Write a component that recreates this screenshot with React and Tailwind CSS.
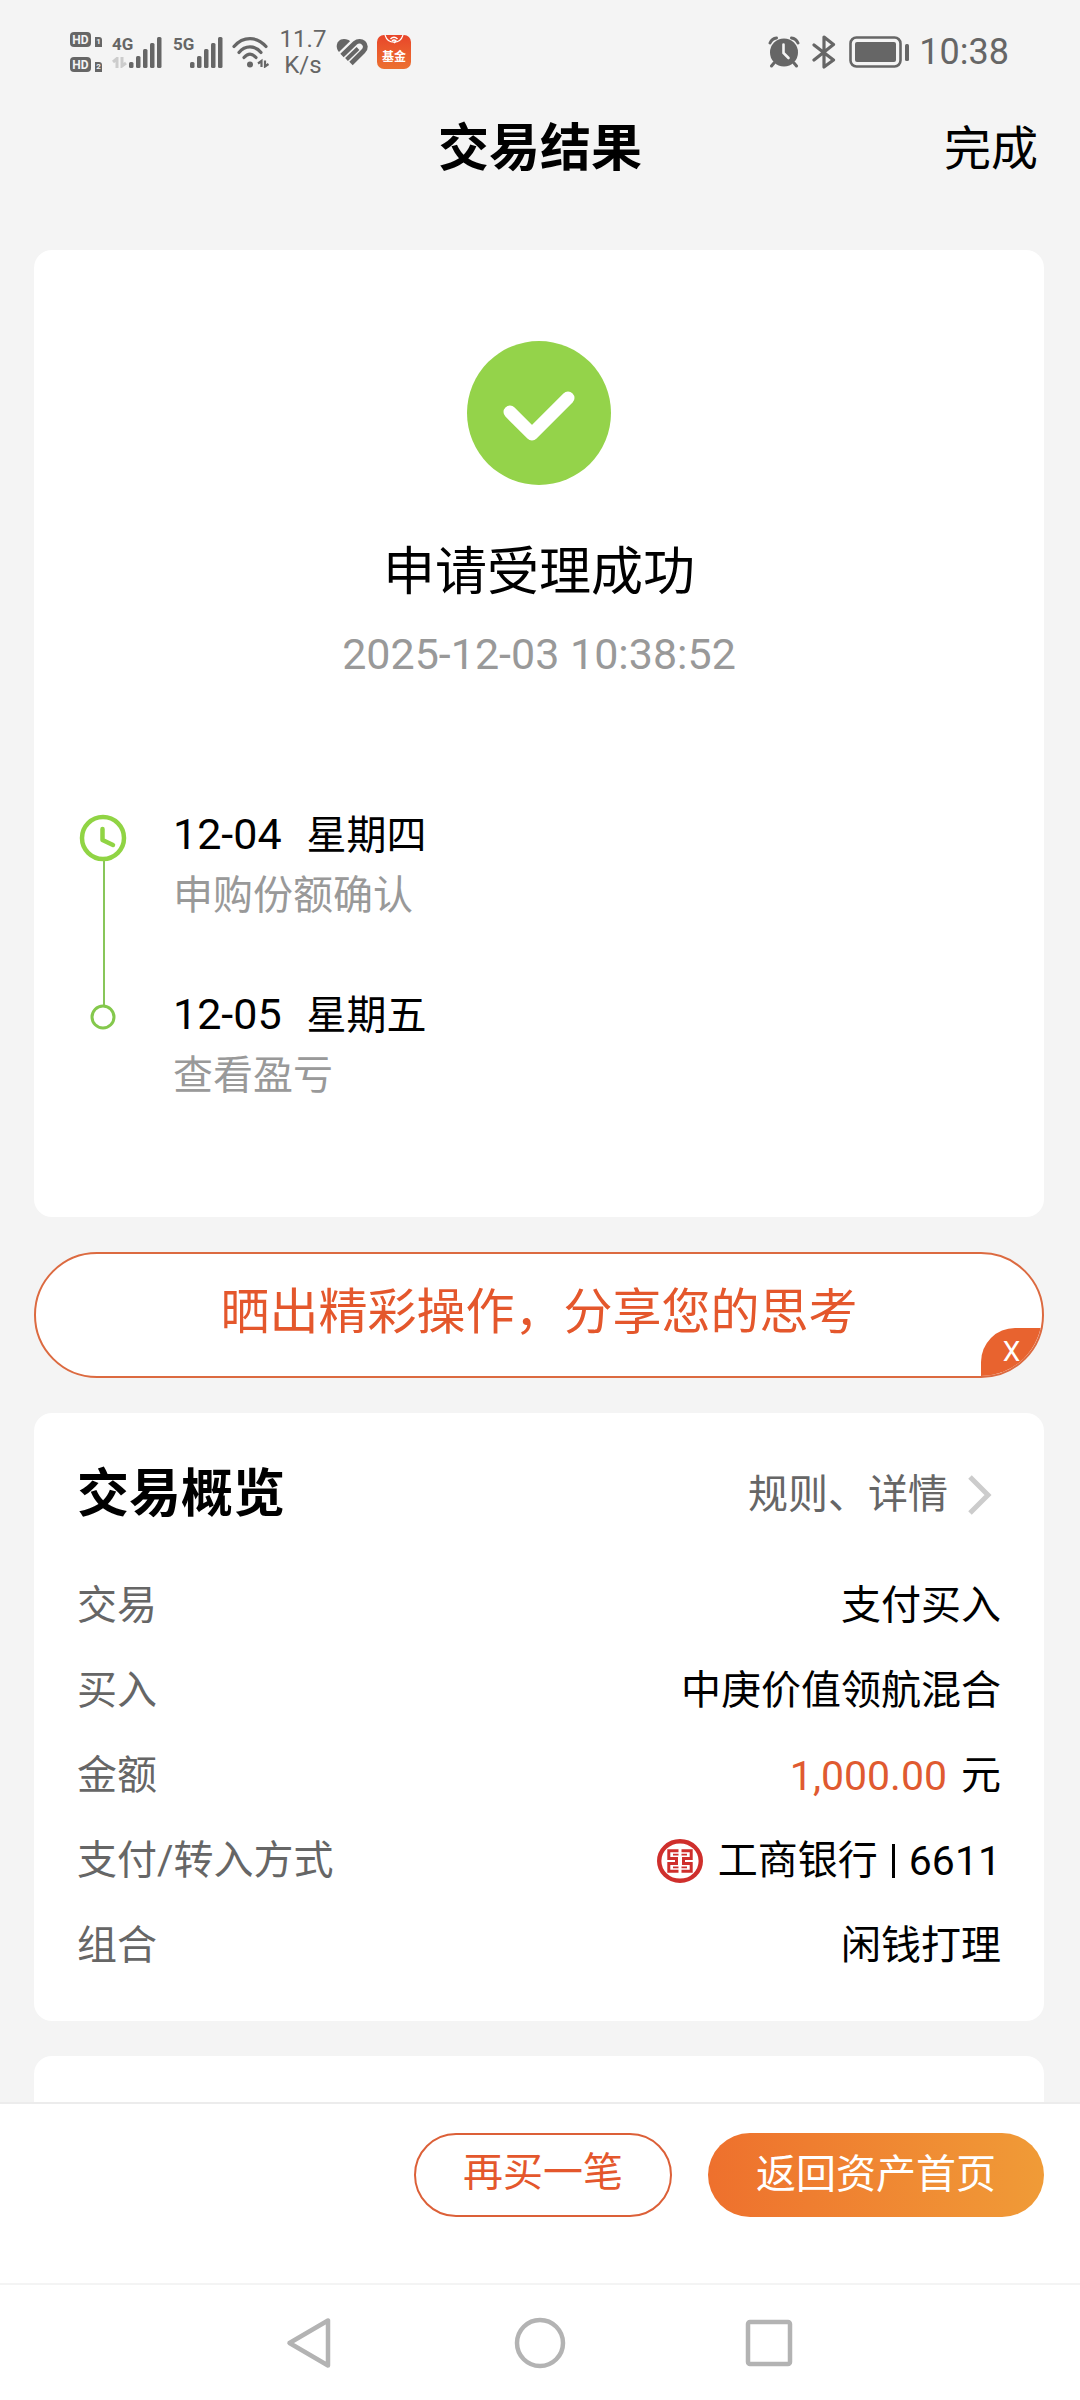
import { useState } from 'react'

const STEPS = [
  { date: '12-04', day: '星期四', text: '申购份额确认' },
  { date: '12-05', day: '星期五', text: '查看盈亏' },
]

function HdBadge({ sim }) {
  return (
    <div className="flex items-end gap-1">
      <span className="flex h-[15px] w-[21px] items-center justify-center rounded-[4px] bg-[#666] text-[12px] leading-none font-bold text-[#f4f4f4]">
        HD
      </span>
      <span className="flex h-[10px] w-[7px] items-center justify-center rounded-tr-[3px] bg-[#666] text-[8px] leading-none font-bold text-[#f4f4f4]">
        {sim}
      </span>
    </div>
  )
}

function DataArrows({ className }) {
  return (
    <svg viewBox="0 0 15 11" className={className} fill="none" stroke="currentColor" strokeWidth="3">
      <path d="M1 5 L5 1.500 V11 M10 0 V9 L14 6" />
    </svg>
  )
}

function Signal({ label, arrows }) {
  return (
    <div className="flex h-[31px] items-stretch">
      <div className="flex w-[17px] flex-col justify-between">
        <span className="text-[17px] leading-[15px] font-bold font-[Roboto]">{label}</span>
        {arrows && <DataArrows className="h-[11px] w-[15px] text-[#ccc]" />}
      </div>
      <svg viewBox="0 0 33 31" className="h-[31px] w-[33px]" fill="currentColor">
        <rect x="0" y="25" width="4.500" height="6" rx="1.500" />
        <rect x="7" y="19" width="4.500" height="12" rx="1.500" />
        <rect x="14" y="12" width="4.500" height="19" rx="1.500" />
        <rect x="21" y="6" width="4.500" height="25" rx="1.500" />
        <rect x="28" y="0" width="4.500" height="31" rx="1.500" />
      </svg>
    </div>
  )
}

function StatusBar() {
  return (
    <div className="flex h-[104px] items-center justify-between pr-[71px] pl-[70px] text-[#666]">
      <div className="flex items-center">
        <div className="flex flex-col gap-[10px]">
          <HdBadge sim="1" />
          <HdBadge sim="2" />
        </div>
        <div className="ml-[10px] flex gap-[11px]">
          <Signal label="4G" arrows />
          <Signal label="5G" />
        </div>
        {/* wifi */}
        <svg viewBox="0 0 38 31" className="ml-[9px] h-[31px] w-[38px]" fill="none" stroke="currentColor" strokeWidth="3.200" strokeLinecap="round">
          <path d="M2 9.500 C11 -1 25 -1 34 9.500" />
          <path d="M7 15.500 C13 8 23 8 29 15.500" />
          <path d="M12 20.500 C16 16 20 16 24 20.500" />
          <circle cx="18" cy="27.500" r="3" fill="currentColor" stroke="none" />
          <path d="M26 26.500 L29.500 24 V30 M33 23.500 V29.500 L36.500 27" strokeWidth="2.200" strokeLinecap="butt" />
        </svg>
        <div className="ml-[8px] flex w-[50px] flex-col items-center text-[24px] leading-[26px] font-[Roboto]">
          <span>11.7</span>
          <span>K/s</span>
        </div>
        {/* health */}
        <svg viewBox="0 0 32 28" className="ml-[8px] h-[28px] w-[32px]" fill="none" stroke="currentColor" strokeWidth="4.800">
          <path d="M3 14 C-1.500 9 1 1 8 1 C11 1 13 2 14 3.200 Z" fill="currentColor" stroke="none" />
          <path d="M6 17.500 L19 5 C25 0 33 7 27.500 13 L15 25.500" />
          <path d="M10.500 21.500 L22 10.500" strokeWidth="4" />
        </svg>
        <div className="ml-[9px] flex h-[34px] w-[34px] flex-col items-center overflow-hidden rounded-[7px] bg-linear-to-b from-[#e8452a] to-[#ec7030] text-white">
          <svg viewBox="0 0 20 12" className="h-[12px] w-[20px] shrink-0" fill="none" stroke="currentColor">
            <path d="M1 0 A9.500 10.500 0 0 0 19 0" strokeWidth="1.200" />
            <path d="M6.500 4 Q10 0.500 13.500 4 M8 6 Q10 4 12 6 L10 8" strokeWidth="1.500" />
          </svg>
          <span className="mt-[3px] text-[12px] leading-[14px] font-bold whitespace-nowrap">基金</span>
        </div>
      </div>

      <div className="flex items-center">
        {/* alarm */}
        <svg viewBox="0 0 32 32" className="h-[32px] w-[32px]" fill="none" stroke="currentColor" strokeLinecap="round">
          <circle cx="16" cy="16.500" r="14" fill="currentColor" stroke="none" />
          <path d="M2 7 Q4 2.500 8.500 2 M30 7 Q28 2.500 23.500 2" strokeWidth="3" />
          <path d="M6 27 L3.500 30 M26 27 L28.500 30" strokeWidth="3" />
          <path d="M15.500 8.500 V17 L20.500 22" stroke="#f4f4f4" strokeWidth="2.600" />
        </svg>
        {/* bluetooth */}
        <svg viewBox="0 0 24 34" className="ml-[12px] h-[34px] w-[24px]" fill="none" stroke="currentColor" strokeWidth="3.200" strokeLinejoin="round" strokeLinecap="round">
          <path d="M2 10 L21.500 25 L12 32 V2 L21.500 9.500 L2 25" />
        </svg>
        {/* battery */}
        <svg viewBox="0 0 60 32" className="ml-[13px] h-[32px] w-[60px]" fill="currentColor">
          <rect x="1.500" y="1.500" width="50" height="29" rx="6" fill="none" stroke="currentColor" strokeWidth="2.600" />
          <rect x="6" y="6" width="41" height="20" rx="2" />
          <rect x="56" y="8" width="4" height="17" rx="1.500" />
        </svg>
        <span className="ml-[10px] text-[36px] leading-[40px] font-[Roboto]">10:38</span>
      </div>
    </div>
  )
}

function Timeline() {
  return (
    <div className="flex">
      <svg viewBox="0 0 48 218" className="mt-[10px] h-[218px] w-[48px]" fill="none">
        <path d="M25 46 V196" stroke="#88c659" strokeWidth="2" />
        <circle cx="24" cy="24" r="21" stroke="#90d444" strokeWidth="4.500" />
        <path d="M23.500 15 V26 L34 31" stroke="#90d444" strokeWidth="4.500" strokeLinecap="round" strokeLinejoin="round" />
        <circle cx="24" cy="203" r="11" fill="#fff" stroke="#84c84c" strokeWidth="3" />
      </svg>
      <ol className="ml-[46px] flex flex-col gap-[58px]">
        {STEPS.map(step => (
          <li key={step.date}>
            <p className="flex items-baseline gap-[25px] text-[40px] leading-[60px]">
              <span className="text-[43px]">{step.date}</span>
              <span>{step.day}</span>
            </p>
            <p className="text-[40px] leading-[60px] text-[#999]">{step.text}</p>
          </li>
        ))}
      </ol>
    </div>
  )
}

// ICBC mark: two mirrored halves inside a ring
function BankLogo() {
  return (
    <svg viewBox="0 0 46 44" className="h-[44px] w-[46px]" fill="none" stroke="#cf2f2c">
      <ellipse cx="23" cy="22" rx="20.800" ry="19.800" strokeWidth="4.400" />
      <path d="M21.500 11.800 H11.800 V19.500 H19.500 V24.500 H11.800 V32.200 H21.500" strokeWidth="3" />
      <path d="M24.500 11.800 H34.200 V19.500 H26.500 V24.500 H34.200 V32.200 H24.500" strokeWidth="3" />
      <path d="M16 15.600 H21.500 M24.500 15.600 H30 M16 28.400 H21.500 M24.500 28.400 H30" strokeWidth="1.600" />
    </svg>
  )
}

function Row({ label, children }) {
  return (
    <div className="flex h-[85px] items-center justify-between">
      <dt className="text-[#666]">{label}</dt>
      <dd className="flex items-center">{children}</dd>
    </div>
  )
}

export default function App() {
  const [showShare, setShowShare] = useState(true)

  return (
    <div className="flex h-screen flex-col overflow-hidden bg-[#f4f4f4] font-[Roboto,'Noto_Sans_CJK_SC',sans-serif] text-black">
      <StatusBar />

      <header className="grid h-[90px] shrink-0 grid-cols-3 items-center px-[42px]">
        <h1 className="col-start-2 text-center text-[51px] leading-[72px] font-bold">交易结果</h1>
        <button type="button" className="justify-self-end text-[47px] leading-[72px]">完成</button>
      </header>

      <main className="flex min-h-0 flex-1 flex-col gap-[35px] overflow-hidden pt-[56px] pr-[36px] pl-[34px]">
        <section className="shrink-0 rounded-[18px] bg-white px-[45px] pt-[91px] pb-[111px]">
          <div className="flex flex-col items-center">
            <svg viewBox="0 0 144 144" className="h-[144px] w-[144px]" fill="none">
              <circle cx="72" cy="72" r="72" fill="#94d34a" />
              <path d="M43 71 L65 93 L101 57" stroke="#fff" strokeWidth="13" strokeLinecap="round" strokeLinejoin="round" />
            </svg>
            <h2 className="mt-[50px] text-[52px] leading-[76px]">申请受理成功</h2>
            <time className="mt-[13px] text-[43px] leading-[60px] text-[#999]">2025-12-03 10:38:52</time>
          </div>
          <div className="mt-[120px]">
            <Timeline />
          </div>
        </section>

        {showShare && (
          <div className="relative h-[126px] shrink-0 overflow-hidden rounded-full border-2 border-[#dc6a40] bg-white">
            <button type="button" className="h-full w-full pb-[4px] text-[49px] leading-[72px] text-[#e4572c]">
              晒出精彩操作，分享您的思考
            </button>
            <button
              type="button"
              aria-label="关闭"
              onClick={() => setShowShare(false)}
              className="absolute right-0 bottom-0 h-[48px] w-[61px] rounded-tl-[34px] bg-[#e8632f] text-[28px] leading-[48px] text-white"
            >
              X
            </button>
          </div>
        )}

        <section className="shrink-0 rounded-[18px] bg-white px-[43px] pt-[41px] pb-[33px]">
          <div className="flex h-[82px] items-center justify-between">
            <h2 className="text-[52px] leading-[76px] font-bold">交易概览</h2>
            <a href="#rules" className="flex items-center gap-[20px] pr-[9px] text-[40px] leading-[60px] text-[#666]">
              规则、详情
              <svg viewBox="0 0 24 40" className="h-[40px] w-[24px]" fill="none" stroke="#ccc" strokeWidth="5">
                <path d="M2 2 L20 20 L2 38" />
              </svg>
            </a>
          </div>
          <dl className="mt-[27px] text-[40px] leading-[60px]">
            <Row label="交易">支付买入</Row>
            <Row label="买入">中庚价值领航混合</Row>
            <Row label="金额">
              <span className="mr-[14px] text-[41px] text-[#e05a30]">1,000.00</span>元
            </Row>
            <Row label="支付/转入方式">
              <BankLogo />
              <span className="ml-[15px]">工商银行</span>
              <span className="mx-[14px] h-[34px] w-[3px] bg-black" />
              <span className="text-[41px]">6611</span>
            </Row>
            <Row label="组合">闲钱打理</Row>
          </dl>
        </section>

        <section className="h-[400px] shrink-0 rounded-[18px] bg-white" />
      </main>

      <footer className="shrink-0 border-t-2 border-[#ececec] bg-white">
        <div className="flex h-[179px] items-start justify-end gap-[36px] px-[36px] pt-[29px]">
          <button type="button" className="h-[84px] rounded-full border-2 border-[#dc6038] px-[47px] pb-[4px] text-[40px] leading-[60px] text-[#e4572c]">
            再买一笔
          </button>
          <button type="button" className="h-[84px] rounded-full bg-linear-to-r from-[#ee702d] to-[#f09b37] px-[48px] text-[40px] leading-[60px] text-white">
            返回资产首页
          </button>
        </div>
        <nav className="flex h-[117px] items-center justify-center gap-[178px] border-t-2 border-[#f4f4f4]">
          <button type="button" aria-label="返回">
            <svg viewBox="0 0 52 52" className="h-[52px] w-[52px]" fill="none" stroke="#b3b3b3" strokeWidth="4.500" strokeLinejoin="round">
              <path d="M44 3.500 V48.500 L5.500 26 Z" />
            </svg>
          </button>
          <button type="button" aria-label="主页">
            <svg viewBox="0 0 52 52" className="h-[52px] w-[52px]" fill="none" stroke="#b3b3b3" strokeWidth="4.500">
              <circle cx="26" cy="26" r="23" />
            </svg>
          </button>
          <button type="button" aria-label="最近任务">
            <svg viewBox="0 0 52 52" className="h-[52px] w-[52px]" fill="none" stroke="#b3b3b3" strokeWidth="4.500">
              <rect x="4" y="5" width="42" height="42" rx="2" />
            </svg>
          </button>
        </nav>
      </footer>
    </div>
  )
}
